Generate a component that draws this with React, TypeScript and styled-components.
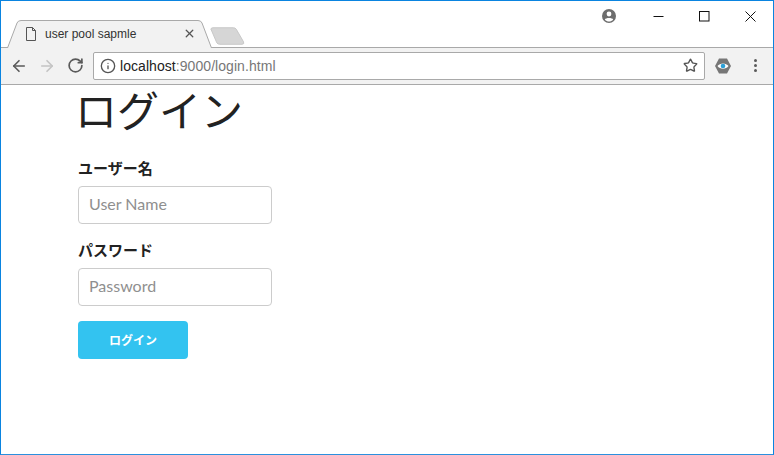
import React from 'react'
import styled, { createGlobalStyle } from 'styled-components'
import { ArrowLeft, ArrowRight, RotateCw, Info, Star, X } from 'lucide-react'

const GlobalStyle = createGlobalStyle`
    html, body {
        margin: 0;
        padding: 0;
        height: 100%;
        background: #fff;
    }
    #root {
        height: 100%;
    }
    * {
        box-sizing: border-box;
    }
`

const Window = styled.div`
    height: 100vh;
    display: flex;
    flex-direction: column;
    border: 1px solid #0a84e0;
    border-bottom-color: #2b90de;
    background: #fff;
    overflow: hidden;
`

const TitleBar = styled.div`
    height: 47px;
    display: flex;
    align-items: flex-start;
    justify-content: space-between;
    border-bottom: 1px solid #a9a9a9;
    flex: none;
`

const TabStrip = styled.div`
    height: 47px;
    display: flex;
    align-items: flex-end;
    padding-left: 6px;
`

const Tab = styled.div`
    position: relative;
    width: 205px;
    height: 28px;
    display: flex;
    align-items: center;
    padding: 0 16px 1px 18px;
    font: 12px 'Liberation Sans', Arial, sans-serif;
    color: #333;
`

const TabShape = styled.svg`
    position: absolute;
    left: 0;
    top: 0;
`

const TabLabel = styled.span`
    position: relative;
    flex: 1;
    margin-left: 8px;
`

const TabIcon = styled.svg`
    position: relative;
    flex: none;
`

const TabClose = styled(X)`
    position: relative;
    flex: none;
    color: #555;
`

const NewTab = styled.svg`
    margin: 0 0 2px -2px;
    flex: none;
`

const WindowControls = styled.div`
    display: flex;
    align-items: center;
    height: 30px;
    color: #111;
`

const ProfileIcon = styled.svg`
    margin-right: 19px;
`

const ControlButton = styled.div`
    width: 46px;
    height: 30px;
    display: flex;
    align-items: center;
    justify-content: center;
`

const ControlGlyph = styled.svg`
    fill: none;
    stroke: #111;
    stroke-width: 1;
`

const Toolbar = styled.div`
    height: 37px;
    flex: none;
    display: flex;
    align-items: center;
    padding: 0 7px 1px 8px;
    background: #f2f2f2;
    border-bottom: 1px solid #a9a9a9;
`

const NavButton = styled.div<{ $disabled?: boolean }>`
    width: 20px;
    height: 20px;
    margin-right: 8px;
    display: flex;
    align-items: center;
    justify-content: center;
    color: ${({ $disabled }) => ($disabled ? '#c4c4c4' : '#5a5a5a')};
`

const AddressBar = styled.div`
    width: 612px;
    height: 28px;
    display: flex;
    align-items: center;
    padding: 0 6px 0 6px;
    background: #fff;
    border: 1px solid #a9a9a9;
    border-radius: 2px;
    font: 14px 'Liberation Sans', Arial, sans-serif;
    color: #777;
`

const InfoIcon = styled(Info)`
    color: #555;
    margin-right: 4px;
    flex: none;
`

const Url = styled.span`
    flex: 1;
    letter-spacing: 0.06px;
    b {
        font-weight: normal;
        color: #222;
    }
`

const ExtensionIcon = styled.svg`
    margin-left: 10px;
    flex: none;
`

const MenuDots = styled.div`
    margin-left: 23px;
    display: flex;
    flex-direction: column;
    gap: 2px;
    span {
        width: 3px;
        height: 3px;
        border-radius: 50%;
        background: #5a5a5a;
    }
`

const Page = styled.main`
    flex: 1;
    padding: 0 0 0 77px;
    color: #222;
`

const Heading = styled.h1`
    margin: 0 0 22px -3px;
    height: 50px;
    font: 400 42px/47px 'Noto Sans CJK JP', sans-serif;
    color: #222;
`

const Field = styled.div`
    width: 194px;
    margin-bottom: 15px;
`

const Label = styled.label`
    display: block;
    height: 24px;
    margin-bottom: 5px;
    font: 700 15px/22px 'Noto Sans CJK JP', sans-serif;
    color: #222;
`

const Input = styled.input`
    display: block;
    width: 100%;
    height: 38px;
    padding: 0 10px 3px;
    background: #fff;
    border: 1px solid #ccc;
    border-radius: 4px;
    font: 16px Lato, sans-serif;
    outline: none;
    &::placeholder {
        color: #8f8f8f;
        opacity: 1;
    }
`

const SubmitButton = styled.button`
    display: block;
    width: 110px;
    height: 38px;
    padding: 0 0 2px;
    border: 0;
    border-radius: 4px;
    background: #33c3f0;
    color: #fff;
    font: 700 12px 'Noto Sans CJK JP', sans-serif;
    cursor: pointer;
`

const App = () => (
    <Window>
        <GlobalStyle />
        <TitleBar>
            <TabStrip>
                <Tab>
                    <TabShape width="205" height="28" viewBox="0 0 205 28">
                        <path
                            d="M0.5 28 L10 3 Q11 0.5 14 0.5 L191 0.5 Q194 0.5 195 3 L204.5 28"
                            fill="#f2f2f2"
                            stroke="#a9a9a9"
                        />
                    </TabShape>
                    <TabIcon width="12" height="14" viewBox="0 0 12 14" fill="none" stroke="#555">
                        <path d="M1.5 0.5 H7.5 L10.5 3.5 V13.5 H1.5 Z M7.5 0.5 V3.5 H10.5" />
                    </TabIcon>
                    <TabLabel>user pool sapmle</TabLabel>
                    <TabClose size={13} strokeWidth={2.4} />
                </Tab>
                <NewTab width="35" height="19" viewBox="0 0 36 19">
                    <path
                        d="M1 2 Q1 0.5 3 0.5 H24 Q26 0.5 27 2 L34.5 15 Q35.5 17.5 33 17.5 H10 Q8 17.5 7 16 Z"
                        fill="#d6d6d6"
                        stroke="#c6c6c6"
                    />
                </NewTab>
            </TabStrip>
            <WindowControls>
                <ProfileIcon width="14" height="14" viewBox="0 0 14 14">
                    <circle cx="7" cy="7" r="7" fill="#6e6e6e" />
                    <circle cx="7" cy="5" r="2.4" fill="#fff" />
                    <path d="M2.8 10.6 C3.6 8.6 10.4 8.6 11.2 10.6 C10 12 8.5 12.6 7 12.6 C5.5 12.6 4 12 2.8 10.6 Z" fill="#fff" />
                </ProfileIcon>
                <ControlButton>
                    <ControlGlyph width="11" height="11" viewBox="0 0 11 11">
                        <path d="M0.5 5.5 H10.5" />
                    </ControlGlyph>
                </ControlButton>
                <ControlButton>
                    <ControlGlyph width="11" height="11" viewBox="0 0 11 11">
                        <rect x="0.5" y="0.5" width="9.5" height="9.5" />
                    </ControlGlyph>
                </ControlButton>
                <ControlButton>
                    <ControlGlyph width="11" height="11" viewBox="0 0 11 11">
                        <path d="M0.5 0.5 L10.5 10.5 M10.5 0.5 L0.5 10.5" />
                    </ControlGlyph>
                </ControlButton>
            </WindowControls>
        </TitleBar>
        <Toolbar>
            <NavButton>
                <ArrowLeft size={18} strokeWidth={2.2} />
            </NavButton>
            <NavButton $disabled>
                <ArrowRight size={18} strokeWidth={2.2} />
            </NavButton>
            <NavButton>
                <RotateCw size={17} strokeWidth={2.4} />
            </NavButton>
            <AddressBar>
                <InfoIcon size={16} strokeWidth={2} />
                <Url>
                    <b>localhost</b>:9000/login.html
                </Url>
                <Star size={15} strokeWidth={2.2} color="#555" />
            </AddressBar>
            <ExtensionIcon width="16" height="16" viewBox="0 0 16 16">
                <path d="M4 0.5 H12 L16 8 L12 15.5 H4 L0 8 Z" fill="#777" />
                <path d="M2.5 8 C5 4.5 11 4.5 13.5 8 C11 11.5 5 11.5 2.5 8 Z" fill="#fff" />
                <circle cx="8" cy="8" r="2.3" fill="#2c9fd6" />
            </ExtensionIcon>
            <MenuDots>
                <span />
                <span />
                <span />
            </MenuDots>
        </Toolbar>
        <Page>
            <Heading>ログイン</Heading>
            <Field>
                <Label>ユーザー名</Label>
                <Input placeholder="User Name" />
            </Field>
            <Field>
                <Label>パスワード</Label>
                <Input placeholder="Password" />
            </Field>
            <SubmitButton>ログイン</SubmitButton>
        </Page>
    </Window>
)

export default App
